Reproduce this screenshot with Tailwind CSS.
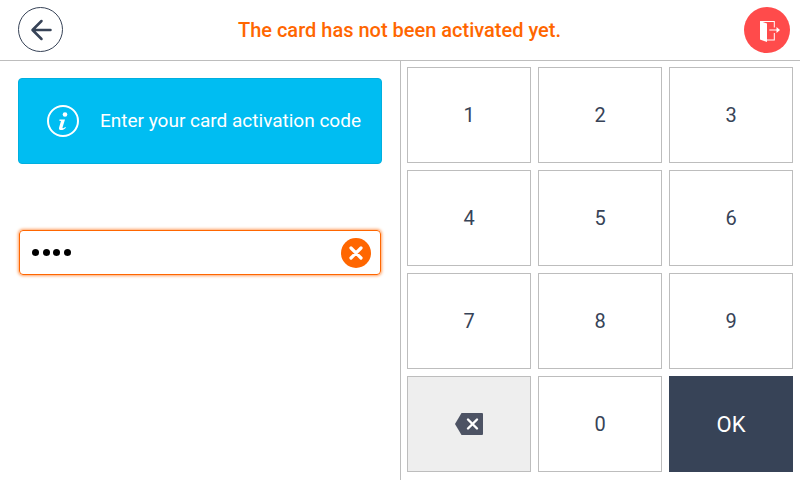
<!DOCTYPE html>
<html lang="en">

<head>
    <meta charset="UTF-8">
    <title>Card activation</title>
    <script src="https://cdn.jsdelivr.net/npm/@tailwindcss/browser@4"></script>
</head>

<body class="bg-white font-['Roboto',sans-serif] text-[#374357] w-[800px] h-[480px] overflow-hidden">
    <!-- header -->
    <div class="h-[61px] border-b border-[#bdbdbd] flex items-center pl-[18px] pr-[10px]">
        <button class="w-[45px] h-[45px] mb-[1px] rounded-full border border-[#374357] flex items-center justify-center">
            <svg width="24" height="24" viewBox="0 0 24 24" fill="none" stroke="#374357" stroke-width="2.500" stroke-linecap="round" stroke-linejoin="round">
                <path d="M21.500 12H4M12.500 3 3.500 12l9 9"></path>
            </svg>
        </button>
        <div class="flex-1 pr-[8px] mb-[1px] text-center text-[20px] font-medium text-[#ff6600] leading-none">The card has not been activated yet.</div>
        <button class="w-[46px] h-[46px] rounded-full bg-[#ff4b4b] flex items-center justify-center">
            <svg width="26" height="26" viewBox="0 0 26 26" fill="#fff">
                <path d="M6 4H20.800V10.500H19.800V5H6z"></path>
                <path d="M6 4 13 6.500V25L6 22.500z"></path>
                <path d="M19.800 16H20.800V23.500H13V22.500H19.800z"></path>
                <path d="M15.300 12.500H22.500V10L26 13l-3.500 3V13.500H15.300z"></path>
            </svg>
        </button>
    </div>

    <div class="flex h-[419px]">
        <!-- left panel -->
        <div class="w-[401px] border-r border-[#bdbdbd] px-[18px] pt-[17px]">
            <div class="h-[86px] bg-[#00bdf2] border border-[#00afdf] rounded-[4px] flex items-center pl-[27px] text-white">
                <svg width="34" height="34" viewBox="0 0 34 34" fill="none" class="mr-[20px]">
                    <circle cx="17" cy="17" r="15" stroke="#fff" stroke-width="2"></circle>
                    <circle cx="19" cy="10.500" r="2.300" fill="#fff"></circle>
                    <path d="M13.500 15.500h5.500l-2.500 8c-.2.800.5 1 1.200.6l1.800-1.200.4.800c-1.500 1.500-3 2.400-4.700 2.400-1.800 0-2.600-1-2.100-2.600l1.900-6.500-1.700-.3z" fill="#fff"></path>
                </svg>
                <span class="text-[19px] leading-none mb-[2px]">Enter your card activation code</span>
            </div>
            <div class="mt-[66px] mx-[1px] h-[45px] border border-[#ff6600] rounded-[4px] shadow-[0_0_3px_1px_#ffa366] flex items-center justify-between pl-[12px] pr-[9px]">
                <div class="flex gap-[3.600px] mb-[1px]">
                    <span class="w-[7px] h-[7px] rounded-full bg-black"></span>
                    <span class="w-[7px] h-[7px] rounded-full bg-black"></span>
                    <span class="w-[7px] h-[7px] rounded-full bg-black"></span>
                    <span class="w-[7px] h-[7px] rounded-full bg-black"></span>
                </div>
                <button class="w-[30px] h-[30px] rounded-full bg-[#ff6600] flex items-center justify-center">
                    <svg width="14" height="14" viewBox="0 0 14 14" fill="none" stroke="#fff" stroke-width="3.200" stroke-linecap="round">
                        <path d="M2 2l10 10M12 2 2 12"></path>
                    </svg>
                </button>
            </div>
        </div>

        <!-- keypad -->
        <div class="grid grid-cols-[124px_124px_124px] grid-rows-[96px_96px_96px_96px] gap-[7px] pt-[6px] pl-[6px] text-[20px]">
            <button class="border border-[#bdbdbd] flex items-center justify-center">1</button>
            <button class="border border-[#bdbdbd] flex items-center justify-center">2</button>
            <button class="border border-[#bdbdbd] flex items-center justify-center">3</button>
            <button class="border border-[#bdbdbd] flex items-center justify-center">4</button>
            <button class="border border-[#bdbdbd] flex items-center justify-center">5</button>
            <button class="border border-[#bdbdbd] flex items-center justify-center">6</button>
            <button class="border border-[#bdbdbd] flex items-center justify-center">7</button>
            <button class="border border-[#bdbdbd] flex items-center justify-center">8</button>
            <button class="border border-[#bdbdbd] flex items-center justify-center">9</button>
            <button class="border border-[#bdbdbd] bg-[#eeeeee] flex items-center justify-center">
                <svg width="28" height="22" viewBox="0 0 28 22" fill="none">
                    <path d="M6.500 0H27a1 1 0 0 1 1 1v20a1 1 0 0 1-1 1H6.500L0 11z" fill="#4d5364"></path>
                    <path d="M13 6.500l9 9M22 6.500l-9 9" stroke="#fff" stroke-width="2.400" stroke-linecap="round"></path>
                </svg>
            </button>
            <button class="border border-[#bdbdbd] flex items-center justify-center">0</button>
            <button class="bg-[#374357] text-white text-[22px] flex items-center justify-center">OK</button>
        </div>
    </div>
</body>

</html>
